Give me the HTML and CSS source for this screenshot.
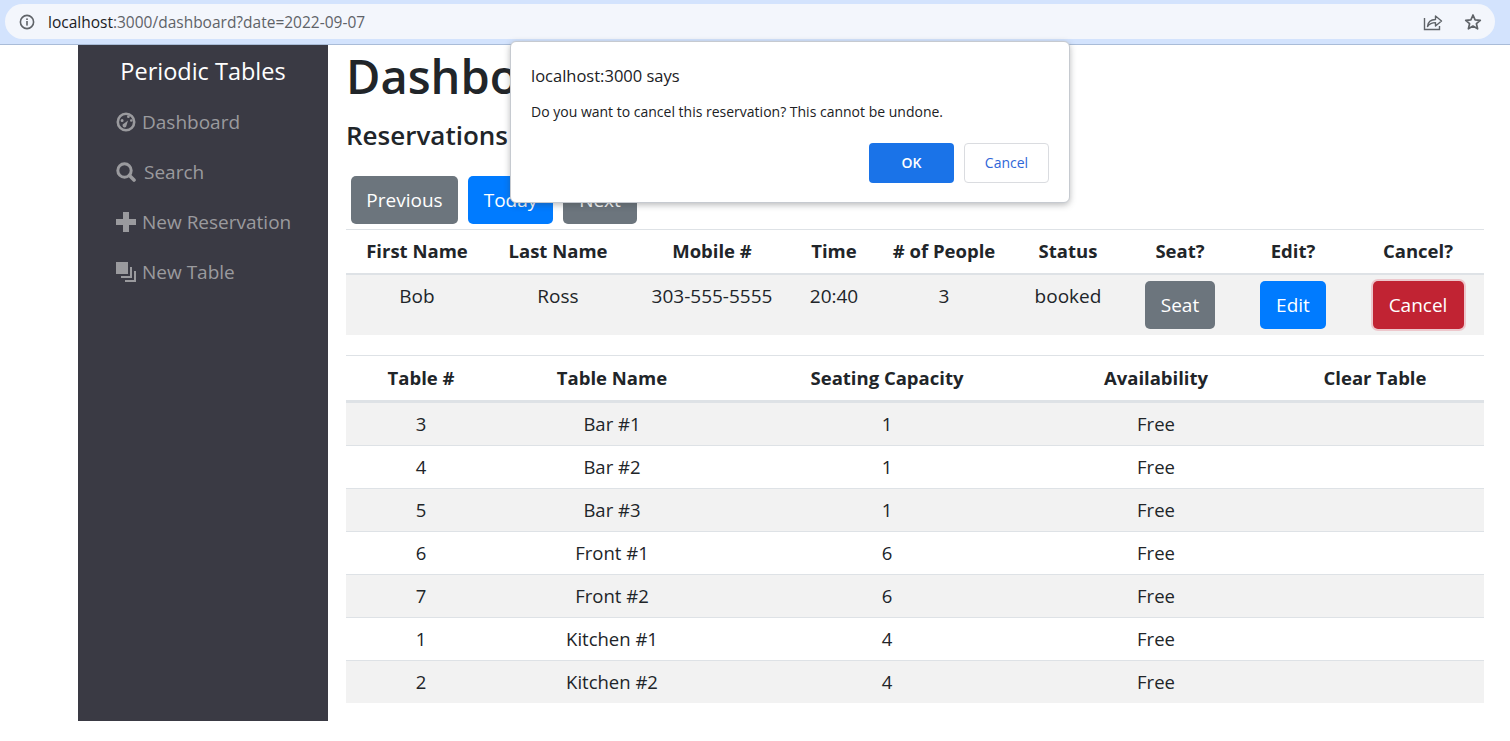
FILE: index.html
```html
<!DOCTYPE html>
<html lang="en">
<head>
<meta charset="utf-8">
<title>Periodic Tables</title>
<link rel="stylesheet" href="styles.css">
</head>
<body>
<header class="chrome">
  <div class="omnibox">
    <svg class="info" viewBox="0 0 16 16" width="16" height="16"><circle cx="8" cy="8" r="6.6" fill="none" stroke="#5f6368" stroke-width="1.6"/><rect x="7.2" y="7" width="1.6" height="4.6" fill="#5f6368"/><rect x="7.2" y="4.4" width="1.6" height="1.6" fill="#5f6368"/></svg>
    <span class="url"><span class="host">localhost</span>:3000/dashboard?date=2022-09-07</span>
    <svg class="share" viewBox="0 0 20 18" width="20" height="18"><path d="M1.5 5v11.5h15V13" fill="none" stroke="#5f6368" stroke-width="1.4"/><path d="M4.5 13.5c.5-4.5 3.5-7 8-7V3l6 5-6 5V9.6c-3.500 0-6 1-8 3.900z" fill="none" stroke="#5f6368" stroke-width="1.4" stroke-linejoin="round"/></svg>
    <svg class="star" viewBox="0 0 18 18" width="18" height="18"><path d="M9 2l2.100 4.800 5.200.5-3.900 3.400 1.200 5.100L9 13.100 4.400 15.800l1.200-5.100L1.700 7.300l5.200-.5z" fill="none" stroke="#5f6368" stroke-width="1.700" stroke-linejoin="round"/></svg>
  </div>
</header>

<div class="app">
  <nav class="sidebar">
    <div class="brand">Periodic Tables</div>
    <a class="nav-item">
      <svg class="icon" viewBox="0 0 20 20" width="20" height="20"><circle cx="10" cy="10" r="8.200" fill="none" stroke="#9a9a9e" stroke-width="2.600"/><circle cx="10" cy="10" r="7" fill="none"/><path d="M4.600 8.600a1.500 1.500 0 1 0 3 0a1.500 1.500 0 1 0-3 0zM11 4.700a1.400 1.400 0 1 0 2.800 0a1.400 1.400 0 1 0-2.800 0zM14 8.500a1.300 1.300 0 1 0 2.600 0a1.300 1.300 0 1 0-2.600 0z" fill="#9a9a9e"/><path d="M8 11.500l4-3-1.500 5a2 2 0 1 1-2.500-2z" fill="#9a9a9e"/></svg>
      <span>Dashboard</span>
    </a>
    <a class="nav-item">
      <svg class="icon" viewBox="0 0 20 20" width="20" height="20"><circle cx="8.500" cy="8.500" r="6.700" fill="none" stroke="#9a9a9e" stroke-width="3"/><path d="M13.500 13.500l4.500 4.500" stroke="#9a9a9e" stroke-width="3.600" stroke-linecap="round"/></svg>
      <span class="search-label">Search</span>
    </a>
    <a class="nav-item">
      <svg class="icon" viewBox="0 0 20 20" width="20" height="20"><path d="M7 0h6v7h7v6h-7v7H7v-7H0V7h7z" fill="#9a9a9e"/></svg>
      <span>New Reservation</span>
    </a>
    <a class="nav-item">
      <svg class="icon" viewBox="0 0 20 20" width="20" height="20"><rect x="0" y="0" width="12" height="12" fill="#9a9a9e"/><path d="M14 5v9H5v2h11V5z" fill="#9a9a9e"/><path d="M18 9v9H9v2h11V9z" fill="#9a9a9e"/></svg>
      <span>New Table</span>
    </a>
  </nav>

  <main class="content">
    <h1 class="title">Dashboard</h1>
    <h4 class="subtitle">Reservations for 2022-09-07</h4>
    <div class="day-nav">
      <button class="btn btn-grey">Previous</button>
      <button class="btn btn-blue">Today</button>
      <button class="btn btn-grey">Next</button>
    </div>

    <table class="grid reservations">
      <thead>
        <tr><th>First Name</th><th>Last Name</th><th>Mobile #</th><th>Time</th><th># of People</th><th>Status</th><th>Seat?</th><th>Edit?</th><th>Cancel?</th></tr>
      </thead>
      <tbody>
        <tr>
          <td>Bob</td><td>Ross</td><td>303-555-5555</td><td>20:40</td><td>3</td><td>booked</td>
          <td><button class="btn btn-grey btn-row">Seat</button></td>
          <td><button class="btn btn-blue btn-row">Edit</button></td>
          <td><button class="btn btn-red btn-row">Cancel</button></td>
        </tr>
      </tbody>
    </table>

    <table class="grid tables">
      <thead>
        <tr><th>Table #</th><th>Table Name</th><th>Seating Capacity</th><th>Availability</th><th>Clear Table</th></tr>
      </thead>
      <tbody>
        <tr><td>3</td><td>Bar #1</td><td>1</td><td>Free</td><td></td></tr>
        <tr><td>4</td><td>Bar #2</td><td>1</td><td>Free</td><td></td></tr>
        <tr><td>5</td><td>Bar #3</td><td>1</td><td>Free</td><td></td></tr>
        <tr><td>6</td><td>Front #1</td><td>6</td><td>Free</td><td></td></tr>
        <tr><td>7</td><td>Front #2</td><td>6</td><td>Free</td><td></td></tr>
        <tr><td>1</td><td>Kitchen #1</td><td>4</td><td>Free</td><td></td></tr>
        <tr><td>2</td><td>Kitchen #2</td><td>4</td><td>Free</td><td></td></tr>
      </tbody>
    </table>
  </main>
</div>

<div class="dialog">
  <div class="dialog-title">localhost:3000 says</div>
  <div class="dialog-msg">Do you want to cancel this reservation? This cannot be undone.</div>
  <div class="dialog-actions">
    <button class="dlg-btn dlg-ok">OK</button>
    <button class="dlg-btn dlg-cancel">Cancel</button>
  </div>
</div>
</body>
</html>
```

FILE: styles.css
```css
* { box-sizing: border-box; }
html, body { margin: 0; padding: 0; }
body {
  font-family: "Open Sans", "Noto Sans", sans-serif;
  font-size: 19px;
  line-height: 30px;
  color: #212529;
  background: #fff;
  overflow: hidden;
}

/* Browser bar */
.chrome {
  height: 45px;
  padding: 4px 15px 0 5px;
  background: #d3e3fd;
  border-bottom: 1px solid #a9bcd8;
}
.omnibox {
  height: 35px;
  border-radius: 18px;
  background: #f3f6fc;
  display: flex;
  align-items: center;
  padding: 0 14px;
  font-size: 15.500px;
  color: #5f6368;
}
.info { margin-right: 13px; flex: none; }
.url { flex: 1; }
.host { color: #202124; }
.share { margin-right: 21px; }
.star { margin-right: -1px; }

/* Page */
.app {
  display: flex;
  margin-left: 78px;
  padding-right: 26px;
  height: 676px;
}
.sidebar {
  flex: none;
  width: 250px;
  background: #3a3a44;
  padding-left: 38px;
}
.brand {
  color: #fff;
  font-size: 23.500px;
  line-height: 34px;
  height: 52px;
  padding-top: 9px;
  margin-left: -38px;
  text-align: center;
}
.nav-item {
  display: flex;
  align-items: center;
  height: 50px;
  color: #9a9a9e;
  gap: 6px;
}
.search-label { margin-left: 2px; }
.icon { flex: none; }

.content {
  flex: 1;
  min-width: 0;
  padding-left: 18px;
}
.title {
  margin: 0;
  height: 61px;
  font-size: 47px;
  line-height: 62px;
  font-weight: 600;
  white-space: nowrap;
}
.subtitle {
  margin: 0;
  height: 70px;
  padding-top: 13px;
  font-size: 26px;
  line-height: 32px;
  font-weight: 600;
  white-space: nowrap;
}
.day-nav {
  display: flex;
  gap: 10px;
  padding-left: 5px;
  height: 53px;
}
.btn {
  height: 48px;
  border: 0;
  border-radius: 5px;
  color: #fff;
  font: inherit;
  padding: 0;
}
.btn-grey { background: #6c757d; }
.btn-blue { background: #007bff; }
.btn-red { background: #c12333; box-shadow: 0 0 0 2px #edc7cc; }
.day-nav .btn:nth-child(1) { width: 107px; }
.day-nav .btn:nth-child(2) { width: 85px; }
.day-nav .btn:nth-child(3) { width: 74px; }

/* Tables */
.grid {
  width: 100%;
  table-layout: fixed;
  border-collapse: collapse;
  text-align: center;
}
.grid th {
  padding: 6px 0;
  height: 44px;
  font-weight: 700;
  font-size: 18.500px;
  border-top: 1px solid #dee2e6;
  border-bottom: 2px solid #dee2e6;
}
.grid td { padding: 6px 0; vertical-align: top; }
.grid tbody tr:nth-child(odd) { background: #f2f2f2; }
.reservations { margin-bottom: 20px; }
.reservations th:nth-child(1) { width: 136px; padding-left: 6px; }
.reservations td:nth-child(1) { padding-left: 6px; }
.reservations th:nth-child(2) { width: 152px; }
.reservations th:nth-child(3) { width: 156px; }
.reservations th:nth-child(4) { width: 88px; }
.reservations th:nth-child(5) { width: 132px; }
.reservations th:nth-child(6) { width: 116px; }
.reservations th:nth-child(7) { width: 108px; }
.reservations th:nth-child(8) { width: 118px; }
.reservations th:nth-child(9) { width: 132px; }
.btn-row { display: inline-block; vertical-align: top; }
.reservations td:nth-child(7) .btn { width: 70px; }
.reservations td:nth-child(8) .btn { width: 66px; }
.reservations td:nth-child(9) .btn { width: 91px; }
.reservations tbody tr { height: 60px; }
.tables th { height: 46px; border-bottom-width: 3px; }
.tables th:nth-child(1) { width: 150px; }
.tables th:nth-child(2) { width: 232px; }
.tables th:nth-child(3) { width: 318px; }
.tables th:nth-child(4) { width: 220px; }
.tables th:nth-child(5) { width: 218px; }
.tables td { height: 43px; font-size: 18.500px; padding: 6px 0; }
.tables tbody tr + tr td { border-top: 1px solid #dee2e6; }

/* JS confirm */
.dialog {
  position: absolute;
  left: 510px;
  top: 41px;
  width: 560px;
  height: 162px;
  background: #fff;
  border: 1px solid #c6cad0;
  border-radius: 6px;
  box-shadow: 0 2px 6px rgba(60, 64, 67, .35);
  padding: 19px 20px 0 20px;
}
.dialog-title { font-size: 16.500px; line-height: 30px; color: #202124; }
.dialog-msg { font-size: 14px; line-height: 20px; margin-top: 11px; color: #202124; }
.dialog-actions {
  display: flex;
  justify-content: flex-end;
  gap: 10px;
  margin-top: 21px;
}
.dlg-btn {
  width: 85px;
  height: 40px;
  border-radius: 4px;
  font: 600 14px/1 "Open Sans", "Noto Sans", sans-serif;
}
.dlg-ok { background: #1a73e8; color: #fff; border: 0; }
.dlg-cancel { background: #fff; color: #2f66d8; border: 1px solid #dadce0; font-weight: 400; }
```
